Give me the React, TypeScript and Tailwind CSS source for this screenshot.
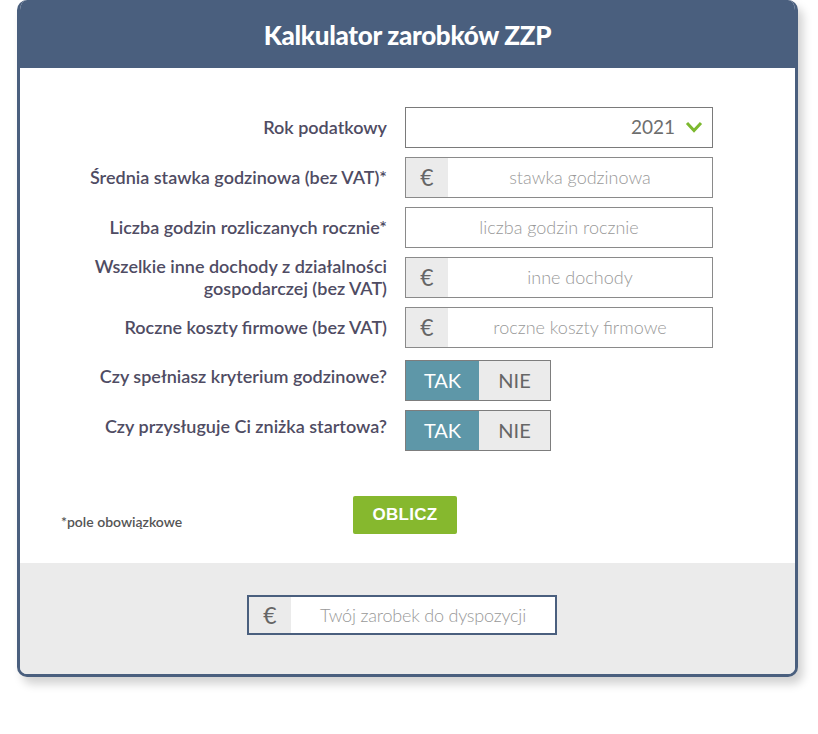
import React from "react";

const Euro = () => (
  <div className="w-[42px] h-full bg-[#ebebeb] flex items-center justify-center text-[23px] text-[#666] font-['Lato',sans-serif] font-normal">
    €
  </div>
);

const labelCls = "w-[367px] text-right text-[18px] font-semibold text-[#4f4c63] leading-[22px]";

function InputRow({ label, placeholder, euro }: { label: React.ReactNode; placeholder: string; euro?: boolean }) {
  return (
    <div className="flex items-center gap-[18px] h-[40px]">
      <div className={labelCls}>{label}</div>
      <div className="w-[308px] h-[41px] border border-[#8a8a8a] flex bg-white">
        {euro && <Euro />}
        <div className="flex-1 flex items-center justify-center text-[18px] font-light text-[#999]">{placeholder}</div>
      </div>
    </div>
  );
}

function ToggleRow({ label }: { label: string }) {
  return (
    <div className="flex items-center gap-[18px] h-[40px]">
      <div className={`${labelCls} -mt-[9px]`}>{label}</div>
      <div className="w-[146px] h-[41px] border border-[#7d7d7d] flex">
        <div className="w-[73px] h-full bg-[#5e97a8] text-white text-[20px] flex items-center justify-center">TAK</div>
        <div className="flex-1 h-full bg-[#ebebeb] text-[#666] text-[20px] flex items-center justify-center">NIE</div>
      </div>
    </div>
  );
}

export default function App() {
  return (
    <div className="w-[818px] h-[734px] bg-white font-['Lato',sans-serif] pl-[17px]">
      <div className="w-[781px] h-[677px] rounded-[10px] border-[3px] border-t-0 border-[#4a5f7e] bg-white overflow-hidden shadow-[5px_7px_10px_rgba(0,0,0,0.18)] flex flex-col">
        <div className="h-[68px] bg-[#4a5f7e] flex items-center justify-center -mx-[3px] pt-[3px]">
          <h1 className="text-white text-[26px] font-black tracking-[-0.3px]">Kalkulator zarobków ZZP</h1>
        </div>
        <div className="pt-[39px] flex flex-col">
          <div className="flex flex-col gap-[10px]">
            <div className="flex items-center gap-[18px] h-[40px]">
              <div className={labelCls}>Rok podatkowy</div>
              <div className="w-[308px] h-[41px] border border-[#7a7a7a] flex items-center justify-end pr-[9px] gap-[10px] bg-white">
                <span className="text-[19px] text-[#6e6e6e]">2021</span>
                <svg width="18" height="12" viewBox="0 0 18 12">
                  <polyline points="2,2 9,9.5 16,2" fill="none" stroke="#7cb82f" strokeWidth="3" />
                </svg>
              </div>
            </div>
            <InputRow label="Średnia stawka godzinowa (bez VAT)*" placeholder="stawka godzinowa" euro />
            <InputRow label="Liczba godzin rozliczanych rocznie*" placeholder="liczba godzin rocznie" />
            <InputRow
              label={<>Wszelkie inne dochody z działalności<br />gospodarczej (bez VAT)</>}
              placeholder="inne dochody"
              euro
            />
            <InputRow label="Roczne koszty firmowe (bez VAT)" placeholder="roczne koszty firmowe" euro />
          </div>
          <div className="flex flex-col gap-[10px] mt-[13px]">
            <ToggleRow label="Czy spełniasz kryterium godzinowe?" />
            <ToggleRow label="Czy przysługuje Ci zniżka startowa?" />
          </div>
          <div className="flex items-center mt-[46px] pl-[41px]">
            <div className="w-[292px] text-[14px] font-semibold text-[#555] pt-[12px]">*pole obowiązkowe</div>
            <button className="w-[104px] h-[38px] bg-[#86b82e] text-white text-[17px] font-bold rounded-[2px] font-['Liberation_Sans',sans-serif] tracking-[0.3px]">OBLICZ</button>
          </div>
        </div>
        <div className="mt-[29px] flex-1 bg-[#ebebeb] pt-[32px] pl-[227px]">
          <div className="w-[310px] h-[40px] border-2 border-[#4a5f7e] flex bg-white">
            <Euro />
            <div className="flex-1 flex items-center justify-center text-[18px] font-light text-[#999] tracking-[-0.2px]">Twój zarobek do dyspozycji</div>
          </div>
        </div>
      </div>
    </div>
  );
}
